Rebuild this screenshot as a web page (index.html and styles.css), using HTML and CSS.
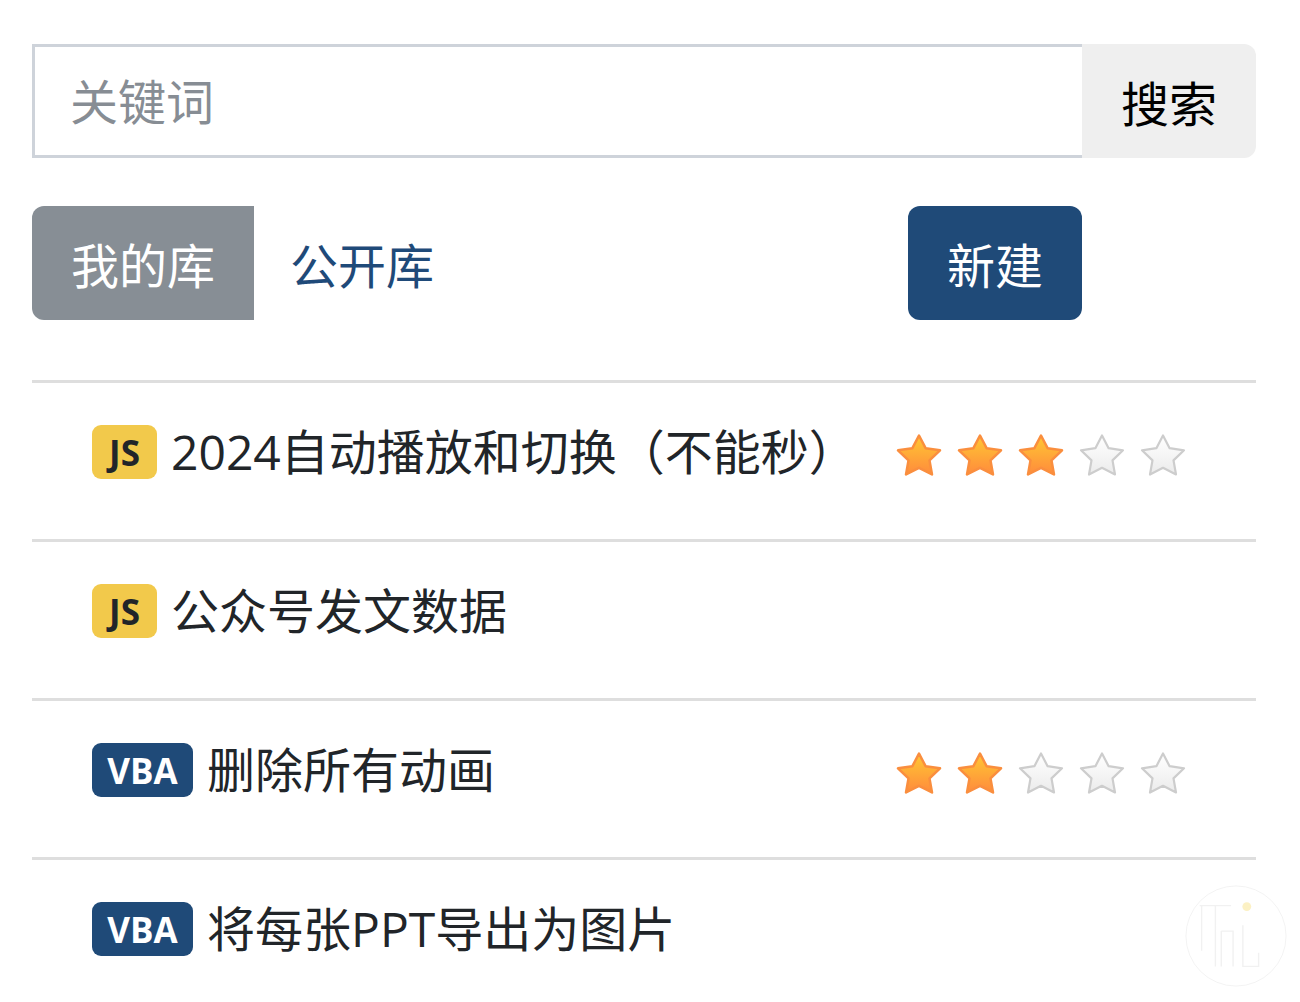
FILE: index.html
```html
<!DOCTYPE html>
<html lang="zh-CN">
<head>
<meta charset="utf-8">
<title>库</title>
<link rel="stylesheet" href="styles.css">
</head>
<body>
<svg class="defs" width="0" height="0" aria-hidden="true">
  <defs>
    <linearGradient id="gOn" x1="0" y1="0" x2="0" y2="1">
      <stop offset="0" stop-color="#ffc833"/>
      <stop offset="1" stop-color="#ff8b3c"/>
    </linearGradient>
    <linearGradient id="gOff" x1="0" y1="0" x2="0" y2="1">
      <stop offset="0" stop-color="#ffffff"/>
      <stop offset="1" stop-color="#ebebeb"/>
    </linearGradient>
    <path id="star" d="M23 2.5 L29.6 15.2 L44 17.3 L33.5 27.4 L36 41.5 L23 34.8 L10 41.5 L12.5 27.4 L2 17.3 L16.4 15.2 Z"/>
  </defs>
</svg>
<div class="page">
  <div class="search">
    <input class="search-input" type="text" placeholder="关键词">
    <button class="search-btn">搜索</button>
  </div>
  <div class="tabs">
    <button class="tab tab-active">我的库</button>
    <button class="tab tab-link">公开库</button>
    <button class="new-btn">新建</button>
  </div>
  <ul class="list">
    <li class="item">
      <span class="badge badge-js">JS</span>
      <span class="title">2024自动播放和切换（不能秒）</span>
      <span class="stars">
        <svg class="star on" viewBox="0 0 46 44"><use href="#star"/></svg>
        <svg class="star on" viewBox="0 0 46 44"><use href="#star"/></svg>
        <svg class="star on" viewBox="0 0 46 44"><use href="#star"/></svg>
        <svg class="star off" viewBox="0 0 46 44"><use href="#star"/></svg>
        <svg class="star off" viewBox="0 0 46 44"><use href="#star"/></svg>
      </span>
    </li>
    <li class="item">
      <span class="badge badge-js">JS</span>
      <span class="title">公众号发文数据</span>
    </li>
    <li class="item">
      <span class="badge badge-vba">VBA</span>
      <span class="title">删除所有动画</span>
      <span class="stars">
        <svg class="star on" viewBox="0 0 46 44"><use href="#star"/></svg>
        <svg class="star on" viewBox="0 0 46 44"><use href="#star"/></svg>
        <svg class="star off" viewBox="0 0 46 44"><use href="#star"/></svg>
        <svg class="star off" viewBox="0 0 46 44"><use href="#star"/></svg>
        <svg class="star off" viewBox="0 0 46 44"><use href="#star"/></svg>
      </span>
    </li>
    <li class="item">
      <span class="badge badge-vba">VBA</span>
      <span class="title">将每张PPT导出为图片</span>
    </li>
  </ul>
</div>
<svg class="watermark" viewBox="0 0 110 110" aria-hidden="true">
  <circle cx="55" cy="55" r="51" fill="none" stroke="#f3f3f3" stroke-width="1"/>
  <path d="M20 24 L20 70 M18 24 L50 24 M34 24 L34 86 M40 50 L40 86 M40 50 L52 50 L52 86 M62 44 L62 86 L78 86 L78 72" fill="none" stroke="#f1f1f1" stroke-width="1.4"/>
  <circle cx="66" cy="25" r="4.5" fill="#fcf1c4"/>
</svg>
</body>
</html>
```
FILE: styles.css
```css
* { box-sizing: border-box; }
html, body { margin: 0; padding: 0; background: #ffffff; }
body {
  font-family: "Open Sans", "Noto Sans CJK SC", sans-serif;
  color: #212529;
  overflow: hidden;
  height: 1002px;
}
.defs { position: absolute; width: 0; height: 0; }
.page {
  width: 1224px;
  margin-left: 32px;
  padding-top: 44px;
}
.search {
  display: flex;
  height: 114px;
}
.search-input {
  flex: 1;
  height: 114px;
  border: 3px solid #ced3da;
  border-right: none;
  border-radius: 0;
  padding: 0 0 0 35px;
  font-family: "Open Sans", "Noto Sans CJK SC", sans-serif;
  font-size: 48px;
  color: #212529;
  outline: none;
  background: #fff;
}
.search-input::placeholder { color: #878d94; }
.search-btn {
  width: 174px;
  height: 114px;
  border: none;
  background: #efefef;
  border-radius: 0 12px 12px 0;
  font-family: "Open Sans", "Noto Sans CJK SC", sans-serif;
  font-size: 48px;
  color: #000;
  padding: 0;
}
.tabs {
  display: flex;
  align-items: center;
  margin-top: 48px;
  height: 114px;
}
.tab {
  height: 114px;
  border: none;
  font-family: "Open Sans", "Noto Sans CJK SC", sans-serif;
  font-size: 48px;
  padding: 0 38px;
  background: transparent;
}
.tab-active {
  width: 222px;
  background: #878e95;
  color: #fff;
  border-radius: 12px 0 0 12px;
}
.tab-link {
  color: #1f4a79;
  padding: 0 36px;
}
.new-btn {
  margin-left: auto;
  margin-right: 174px;
  width: 174px;
  height: 114px;
  border: none;
  border-radius: 12px;
  background: #1f4a78;
  color: #fff;
  font-family: "Open Sans", "Noto Sans CJK SC", sans-serif;
  font-size: 48px;
  padding: 0;
}
.list {
  list-style: none;
  margin: 60px 0 0 0;
  padding: 0;
}
.item {
  display: flex;
  align-items: center;
  height: 159px;
  border-top: 3px solid #dedede;
  padding: 0 70px 18px 60px;
}
.badge {
  display: inline-flex;
  align-items: center;
  justify-content: center;
  height: 54px;
  border-radius: 9px;
  font-weight: 700;
  font-size: 35px;
  line-height: 1;
  flex: none;
}
.badge-js {
  width: 65px;
  background: #f2c94b;
  color: #212529;
}
.badge-vba {
  width: 101px;
  background: #1f4a78;
  color: #fff;
}
.title {
  flex: 1;
  margin-left: 14px;
  font-size: 48px;
  line-height: 1;
  white-space: nowrap;
  color: #212529;
}
.stars {
  display: flex;
  gap: 15px;
  flex: none;
  margin-top: 6px;
}
.star { width: 46px; height: 44px; display: block; overflow: visible; }
.star.on use { fill: url(#gOn); stroke: #fa8e3e; stroke-width: 2.5; stroke-linejoin: round; }
.star.off use { fill: url(#gOff); stroke: #cdcdcd; stroke-width: 2.2; stroke-linejoin: round; }
.watermark {
  position: absolute;
  left: 1182px;
  top: 882px;
  width: 108px;
  height: 108px;
}
```
